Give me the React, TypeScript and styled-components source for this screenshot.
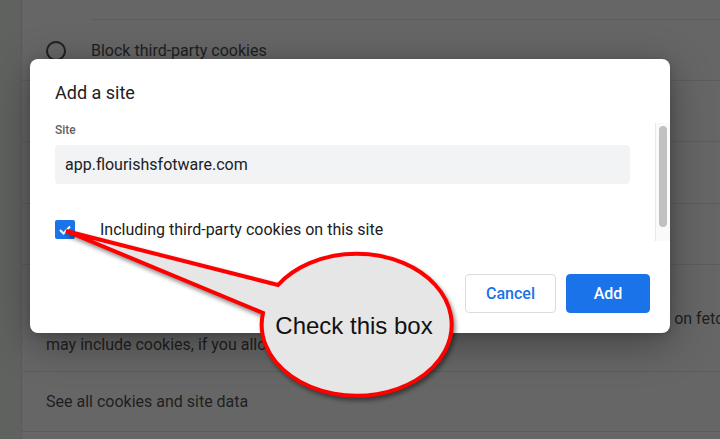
import styled, { createGlobalStyle } from 'styled-components';

const GlobalStyle = createGlobalStyle`
  html, body {
    margin: 0;
    padding: 0;
    overflow: hidden;
  }
  body {
    font-family: Roboto, "Liberation Sans", Arial, sans-serif;
  }
  * {
    box-sizing: border-box;
  }
`;

const Page = styled.div`
  position: relative;
  display: flex;
  width: 720px;
  height: 439px;
  overflow: hidden;
  background: #666666;
`;

const SideStrip = styled.div`
  width: 22px;
  flex-shrink: 0;
  background: #606260;
  border-right: 1px solid #5b5b5b;
`;

const Settings = styled.div`
  flex: 1;
  display: flex;
  flex-direction: column;
  min-width: 0;
`;

const Row = styled.div<{ $height: number; $indent?: number }>`
  position: relative;
  display: flex;
  flex-direction: column;
  justify-content: center;
  height: ${({ $height }) => $height}px;
  flex-shrink: 0;
  padding-left: 24px;
  color: #1f1f1f;
  font-size: 16px;
  line-height: 26px;
  white-space: nowrap;

  &::after {
    content: '';
    position: absolute;
    left: ${({ $indent }) => $indent || 0}px;
    right: 0;
    bottom: 0;
    height: 1px;
    background: #5d5d5d;
  }
`;

const RadioRow = styled.div`
  display: flex;
  align-items: center;
  gap: 25px;
`;

const Radio = styled.span`
  width: 20px;
  height: 20px;
  border-radius: 50%;
  border: 2px solid #1f1f1f;
  flex-shrink: 0;
`;

const Dialog = styled.div`
  position: absolute;
  left: 30px;
  top: 59px;
  width: 640px;
  height: 274px;
  display: flex;
  flex-direction: column;
  background: #ffffff;
  border-radius: 8px;
  box-shadow: 0 10px 40px rgba(0, 0, 0, 0.35), 0 2px 8px rgba(0, 0, 0, 0.15);
  color: #202124;
`;

const DialogTitle = styled.h2`
  margin: 0;
  padding: 23px 25px 19px;
  font-size: 18px;
  font-weight: 400;
  line-height: 22px;
`;

const DialogBody = styled.div`
  display: flex;
  height: 118px;
  flex-shrink: 0;
`;

const BodyContent = styled.div`
  flex: 1;
  overflow: hidden;
  padding: 0 25px;
`;

const ScrollTrack = styled.div`
  width: 15px;
  flex-shrink: 0;
  padding: 3px 3px 0 3px;
  background: #fafafa;
  border-left: 1px solid #e8e8e8;
`;

const ScrollThumb = styled.div`
  width: 8px;
  height: 101px;
  border-radius: 4px;
  background: #c1c1c1;
`;

const FieldLabel = styled.div`
  font-size: 12px;
  font-weight: 500;
  line-height: 13px;
  color: #5f6368;
  padding-top: 1px;
`;

const SiteInput = styled.div`
  margin-top: 8px;
  height: 39px;
  display: flex;
  align-items: center;
  padding: 0 10px;
  background: #f1f3f4;
  border-radius: 4px;
  font-size: 16px;
  color: #202124;
`;

const CheckRow = styled.label`
  display: flex;
  align-items: center;
  gap: 25px;
  margin-top: 36px;
  font-size: 16px;
  color: #202124;
`;

const CheckBox = styled.span`
  width: 20px;
  height: 19px;
  border-radius: 2px;
  background: #1a73e8;
  display: flex;
  align-items: center;
  justify-content: center;
  flex-shrink: 0;
`;

const Footer = styled.div`
  display: flex;
  justify-content: flex-end;
  gap: 10px;
  padding: 33px 20px 20px;
`;

const Button = styled.button<{ $primary?: boolean }>`
  height: 39px;
  min-width: 84px;
  padding: 0 20px;
  border-radius: 4px;
  font-family: Roboto, "Liberation Sans", Arial, sans-serif;
  font-size: 16px;
  font-weight: 500;
  border: 1px solid ${({ $primary }) => ($primary ? '#1a73e8' : '#dadce0')};
  background: ${({ $primary }) => ($primary ? '#1a73e8' : '#ffffff')};
  color: ${({ $primary }) => ($primary ? '#ffffff' : '#1a73e8')};
`;

const Callout = styled.svg`
  position: absolute;
  left: 0;
  top: 0;
  pointer-events: none;
  overflow: visible;

  path {
    filter: drop-shadow(2px 3px 2px rgba(0, 0, 0, 0.45));
  }
  text {
    font-family: "Liberation Sans", Arial, sans-serif;
    font-size: 24px;
  }
`;

const App = () => {
  return (
    <Page>
      <GlobalStyle />
      <SideStrip />
      <Settings>
        <Row $height={20} $indent={70} />
        <Row $height={61}>
          <RadioRow>
            <Radio />
            <span>Block third-party cookies</span>
          </RadioRow>
        </Row>
        <Row $height={61}>Clear cookies and site data when you close all windows</Row>
        <Row $height={62}>Send a "Do Not Track" request</Row>
        <Row $height={61}>Preload pages for faster browsing</Row>
        <Row $height={107}>
          <span>Preload pages for faster browsing and searching</span>
          <span>Chrome preloads pages that you might visit, so that they load much faster. This is based on fetch requests that</span>
          <span>may include cookies, if you allow cookies.</span>
        </Row>
        <Row $height={60}>See all cookies and site data</Row>
      </Settings>

      <Dialog>
        <DialogTitle>Add a site</DialogTitle>
        <DialogBody>
          <BodyContent>
            <FieldLabel>Site</FieldLabel>
            <SiteInput>app.flourishsfotware.com</SiteInput>
            <CheckRow>
              <CheckBox>
                <svg width="14" height="12" viewBox="0 0 14 12">
                  <polyline points="2,6 5.5,9.5 12,2.5" fill="none" stroke="#ffffff" strokeWidth="2" />
                </svg>
              </CheckBox>
              <span>Including third-party cookies on this site</span>
            </CheckRow>
          </BodyContent>
          <ScrollTrack>
            <ScrollThumb />
          </ScrollTrack>
        </DialogBody>
        <Footer>
          <Button>Cancel</Button>
          <Button $primary>Add</Button>
        </Footer>
      </Dialog>

      <Callout width="720" height="439" viewBox="0 0 720 439">
        <path
          d="M 66 231 L 278 285 A 95 71 0 1 1 263 313 Z"
          fill="#e6e6e6"
          stroke="#ff0000"
          strokeWidth="4"
          strokeLinejoin="miter"
          strokeMiterlimit="10"
        />
        <text x="354" y="334" textAnchor="middle" fill="#111111">
          Check this box
        </text>
      </Callout>
    </Page>
  );
};

export default App;
